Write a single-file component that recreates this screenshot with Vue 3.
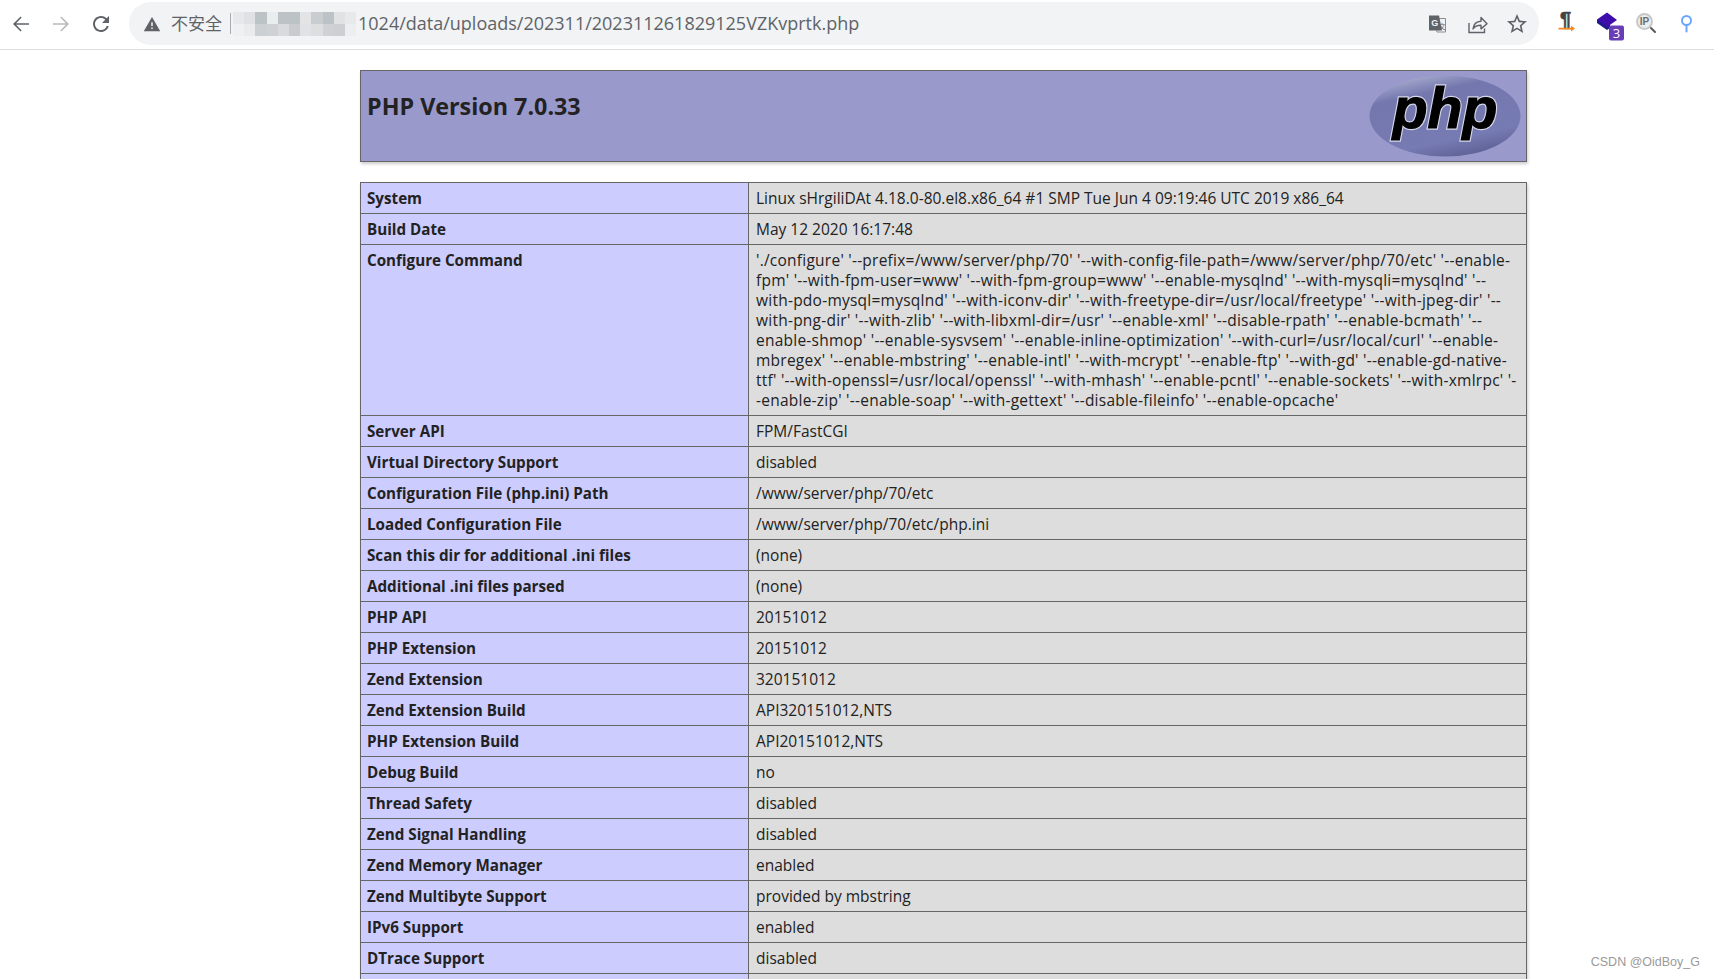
<template>
  <div class="page">
    <!-- Browser toolbar -->
    <header class="toolbar">
      <nav class="nav">
        <button class="nav-btn" type="button">
          <svg width="24" height="24" viewBox="0 0 24 24"><path fill="#5f6368" d="M20 11.2H7.1l5.6-5.6L11.6 4.400 4 12l7.600 7.600 1.100-1.200-5.600-5.600H20z"/></svg>
        </button>
        <button class="nav-btn" type="button">
          <svg width="24" height="24" viewBox="0 0 24 24"><path fill="#b6babd" d="M4 11.200h12.900l-5.600-5.600 1.100-1.200L20 12l-7.600 7.600-1.100-1.200 5.600-5.600H4z"/></svg>
        </button>
        <button class="nav-btn" type="button">
          <svg width="24" height="24" viewBox="0 0 24 24"><path fill="#5f6368" d="M17.65 6.35A7.958 7.958 0 0 0 12 4c-4.42 0-7.99 3.58-7.99 8s3.57 8 7.99 8c3.73 0 6.84-2.55 7.73-6h-2.08A5.99 5.99 0 0 1 12 18c-3.31 0-6-2.69-6-6s2.69-6 6-6c1.66 0 3.14.69 4.22 1.78L13 11h7V4l-2.35 2.35z"/></svg>
        </button>
      </nav>

      <div class="omnibox">
        <svg class="warn" width="18" height="18" viewBox="0 0 24 24"><path fill="#5f6368" fill-rule="evenodd" d="M1 21.500h22L12 2.500zM13 18.500h-2v-2h2zM13 14.500h-2v-5h2z"/></svg>
        <span class="insecure">不安全</span>
        <span class="divider"></span>
        <div class="mosaic">
          <span v-for="(c, i) in mosaic" :key="i" :style="{ background: c }"></span>
        </div>
        <span class="url">1024/data/uploads/202311/202311261829125VZKvprtk.php</span>
        <div class="omni-actions">
          <span class="act">
            <svg width="24" height="24" viewBox="0 0 24 24">
              <path fill="#f1f3f4" stroke="#8a8d90" d="M10 6.500h10.500v13.500H12z"/>
              <path fill="#5f6368" d="M4 3.500h10l3 15H4z"/>
              <text x="6.200" y="13.600" class="tr-g">G</text>
              <text x="13.400" y="17.200" class="tr-x">文</text>
            </svg>
          </span>
          <span class="act">
            <svg width="24" height="24" viewBox="0 0 24 24" fill="none" stroke="#5f6368" stroke-width="1.400">
              <path d="M4 11v9.500h15.500v-4"/>
              <path stroke-linejoin="round" d="M8 17c.5-5 3.600-7.600 8-7.800V5.500l6 6.200-6 5.200v-3.600c-3.400 0-6.200.8-8 3.700z"/>
            </svg>
          </span>
          <span class="act">
            <svg width="24" height="24" viewBox="0 0 24 24"><path fill="#5f6368" d="M22 9.240l-7.190-.62L12 2 9.190 8.630 2 9.240l5.460 4.730L5.820 21 12 17.270 18.180 21l-1.630-7.030L22 9.240zM12 15.400l-3.760 2.270 1-4.280-3.320-2.880 4.380-.38L12 6.100l1.710 4.040 4.380.38-3.320 2.880 1 4.280L12 15.400z"/></svg>
          </span>
        </div>
      </div>

      <div class="extensions">
        <span class="ext">
          <svg width="26" height="26" viewBox="0 0 26 26">
            <text x="11.500" y="15" class="pil">¶</text>
            <path fill="#f5881f" d="M4.500 16.800h12.500v-2l4 2.800-4 2.800v-2H4.500z"/>
          </svg>
        </span>
        <span class="ext">
          <svg width="36" height="36" viewBox="0 0 36 36">
            <path fill="#1f1a8c" d="M8 13.500v3.500L18 24l3-2v-6z"/>
            <path fill="#3f0dab" d="M8 13.500L18 6.500l10 7.500-10 7z"/>
            <rect x="20" y="19.500" width="15" height="15" rx="2" fill="#6a3db8"/>
            <text x="27.500" y="32" class="badge">3</text>
          </svg>
        </span>
        <span class="ext">
          <svg width="26" height="26" viewBox="0 0 26 26">
            <circle cx="10.500" cy="10.500" r="7.500" fill="#eceded" stroke="#c6c8ca" stroke-width="2"/>
            <text x="10.500" y="14.200" class="ip">IP</text>
            <path stroke="#55585b" stroke-width="2" stroke-linecap="round" d="M17 17l4 4"/>
          </svg>
        </span>
        <span class="ext">
          <svg width="24" height="24" viewBox="0 0 24 24" fill="none" stroke="#6aa6ff" stroke-width="2">
            <circle cx="11.500" cy="8.500" r="4.500"/>
            <path stroke-linecap="round" d="M11.500 13v6.500"/>
          </svg>
        </span>
      </div>
    </header>

    <!-- phpinfo page -->
    <main class="center">
      <div class="banner">
        <h1 class="title">PHP Version 7.0.33</h1>
        <svg class="logo" width="152" height="82" viewBox="0 0 152 82">
          <defs>
            <linearGradient id="oval" x1="0.2" y1="0" x2="0.6" y2="1">
              <stop offset="0" stop-color="#b0b3d4"/>
              <stop offset="0.25" stop-color="#7377ad"/>
              <stop offset="0.8" stop-color="#777bb3"/>
              <stop offset="1" stop-color="#5f6397"/>
            </linearGradient>
          </defs>
          <ellipse cx="76" cy="41" rx="75.500" ry="40.500" fill="url(#oval)"/>
          <text x="76" y="53" class="php-shadow">php</text>
          <text x="76" y="53" class="php-mark">php</text>
        </svg>
      </div>

      <table class="info">
        <colgroup>
          <col class="col-key" />
          <col />
        </colgroup>
        <tbody>
          <tr v-for="row in rows" :key="row.key">
            <td class="key">{{ row.key }}</td>
            <td class="val" :class="{ 'val--wide': row.lines.length > 1 }">
              <span v-for="(line, i) in row.lines" :key="i" class="line">{{ line }}</span>
            </td>
          </tr>
          <!-- next row starts right at the window's bottom edge, its text is below the fold -->
          <tr>
            <td class="key">&nbsp;</td>
            <td class="val">&nbsp;</td>
          </tr>
        </tbody>
      </table>
    </main>

    <span class="watermark">CSDN @OidBoy_G</span>
  </div>
</template>

<script setup>
const mosaic = [
  '#e6e8ea', '#dfe2e4', '#bcc3c7', '#e9edee', '#bcc2c5', '#bcc3c6', '#e2e4e6', '#c9cdd0', '#bcc3c6', '#e0e2e4', '#e8eaea',
  '#eef0f1', '#e9ebec', '#cdd0d3', '#cfd2d5', '#d8dadc', '#c8ccce', '#e0e2e5', '#dcdee0', '#cfd2d5', '#cdd0d3', '#eceef0',
]

const configure = [
  "'./configure' '--prefix=/www/server/php/70' '--with-config-file-path=/www/server/php/70/etc' '--enable-",
  "fpm' '--with-fpm-user=www' '--with-fpm-group=www' '--enable-mysqlnd' '--with-mysqli=mysqlnd' '--",
  "with-pdo-mysql=mysqlnd' '--with-iconv-dir' '--with-freetype-dir=/usr/local/freetype' '--with-jpeg-dir' '--",
  "with-png-dir' '--with-zlib' '--with-libxml-dir=/usr' '--enable-xml' '--disable-rpath' '--enable-bcmath' '--",
  "enable-shmop' '--enable-sysvsem' '--enable-inline-optimization' '--with-curl=/usr/local/curl' '--enable-",
  "mbregex' '--enable-mbstring' '--enable-intl' '--with-mcrypt' '--enable-ftp' '--with-gd' '--enable-gd-native-",
  "ttf' '--with-openssl=/usr/local/openssl' '--with-mhash' '--enable-pcntl' '--enable-sockets' '--with-xmlrpc' '-",
  "-enable-zip' '--enable-soap' '--with-gettext' '--disable-fileinfo' '--enable-opcache'",
]

const rows = [
  ['System', 'Linux sHrgiliDAt 4.18.0-80.el8.x86_64 #1 SMP Tue Jun 4 09:19:46 UTC 2019 x86_64'],
  ['Build Date', 'May 12 2020 16:17:48'],
  ['Configure Command', configure],
  ['Server API', 'FPM/FastCGI'],
  ['Virtual Directory Support', 'disabled'],
  ['Configuration File (php.ini) Path', '/www/server/php/70/etc'],
  ['Loaded Configuration File', '/www/server/php/70/etc/php.ini'],
  ['Scan this dir for additional .ini files', '(none)'],
  ['Additional .ini files parsed', '(none)'],
  ['PHP API', '20151012'],
  ['PHP Extension', '20151012'],
  ['Zend Extension', '320151012'],
  ['Zend Extension Build', 'API320151012,NTS'],
  ['PHP Extension Build', 'API20151012,NTS'],
  ['Debug Build', 'no'],
  ['Thread Safety', 'disabled'],
  ['Zend Signal Handling', 'disabled'],
  ['Zend Memory Manager', 'enabled'],
  ['Zend Multibyte Support', 'provided by mbstring'],
  ['IPv6 Support', 'enabled'],
  ['DTrace Support', 'disabled'],
].map(([key, val]) => ({ key, lines: [].concat(val) }))
</script>

<style scoped>
.page {
  position: relative;
  height: 979px;
  overflow: hidden;
  background: #fff;
  font-family: "Open Sans", "Noto Sans CJK SC", sans-serif;
  color: #222;
}

/* ── Toolbar ── */
.toolbar {
  display: flex;
  align-items: flex-start;
  height: 50px;
  padding: 2px 0 0 1px;
  border-bottom: 1px solid #dadce0;
  box-sizing: border-box;
}
.nav {
  display: flex;
  height: 43px;
  align-items: center;
}
.nav-btn {
  width: 40px;
  height: 40px;
  padding: 0;
  display: flex;
  align-items: center;
  justify-content: center;
  border: none;
  background: transparent;
}
.omnibox {
  display: flex;
  align-items: center;
  width: 1410px;
  height: 43px;
  margin-left: 8px;
  padding-left: 14px;
  box-sizing: border-box;
  border-radius: 22px;
  background: #f1f3f4;
}
.warn { flex-shrink: 0; }
.insecure {
  margin: 0 0 2px 10px;
  font-size: 17px;
  color: #5f6368;
  white-space: nowrap;
}
.divider {
  width: 1px;
  height: 21px;
  margin-left: 8px;
  background: #a9acaf;
}
.mosaic {
  display: grid;
  grid-template-columns: repeat(11, 11.200px);
  grid-auto-rows: 12px;
  width: 125px;
  margin-left: 2px;
  filter: blur(0.6px);
}
.url {
  margin-bottom: 2px;
  font-size: 18px;
  color: #5f6368;
  white-space: nowrap;
}
.omni-actions {
  display: flex;
  margin-left: auto;
  padding-right: 2px;
}
.act {
  width: 40px;
  height: 40px;
  display: flex;
  align-items: center;
  justify-content: center;
}
.tr-g {
  font: 700 9px "Liberation Sans", sans-serif;
  fill: #f1f3f4;
}
.tr-x {
  font: 400 7px "Noto Sans CJK SC", sans-serif;
  fill: #5f6368;
}
.extensions {
  display: flex;
  height: 43px;
  margin-left: 8px;
  align-items: center;
}
.ext {
  width: 40px;
  height: 40px;
  display: flex;
  align-items: center;
  justify-content: center;
}
.ext svg { overflow: visible; }
.pil {
  font: 700 20px "Liberation Sans", sans-serif;
  fill: #444;
  stroke: #444;
  stroke-width: 0.6px;
  text-anchor: middle;
}
.badge {
  font: 400 13px "Open Sans", sans-serif;
  fill: #fff;
  text-anchor: middle;
}
.ip {
  font: 700 10px "Liberation Sans", sans-serif;
  fill: #6b6e71;
  text-anchor: middle;
}

/* ── phpinfo ── */
.center {
  width: 1167px;
  margin-left: 360px;
  padding-top: 20px;
}
.banner {
  display: flex;
  justify-content: space-between;
  align-items: flex-start;
  height: 92px;
  box-sizing: border-box;
  padding: 4px 5px 0 6px;
  background: #9999cc;
  border: 1px solid #666;
  box-shadow: 1px 2px 3px #ccc;
}
.title {
  margin: 15px 0 0;
  font-size: 23.300px;
  font-weight: 700;
  line-height: 32px;
  color: #222;
}
.logo { display: block; }
.php-shadow,
.php-mark {
  font: italic 700 57px "Liberation Sans", sans-serif;
  text-anchor: middle;
}
.php-shadow {
  fill: #fff;
  stroke: #d4d6ea;
  stroke-width: 3.500px;
}
.php-mark {
  fill: #000;
  stroke: #000;
  stroke-width: 1.200px;
}

.info {
  width: 1167px;
  margin-top: 20px;
  border-collapse: collapse;
  table-layout: fixed;
  box-shadow: 1px 2px 3px #ccc;
  font-size: 15.500px;
  line-height: 20px;
}
.col-key { width: 388px; }
.info td {
  padding: 5px 6px;
  border: 1px solid #666;
  vertical-align: baseline;
}
.key {
  background: #ccccff;
  font-size: 15.200px;
  font-weight: 700;
  white-space: nowrap;
}
.info .val {
  padding-left: 7px;
  background: #ddd;
}
.val--wide { letter-spacing: 0.240px; }
.line {
  display: block;
  white-space: nowrap;
}

.watermark {
  position: absolute;
  right: 14px;
  top: 955px;
  font: 400 12.500px "Liberation Sans", sans-serif;
  color: #9a9a9a;
}
</style>

<style>
html, body {
  margin: 0;
  overflow: hidden;
  background: #fff;
}
</style>
